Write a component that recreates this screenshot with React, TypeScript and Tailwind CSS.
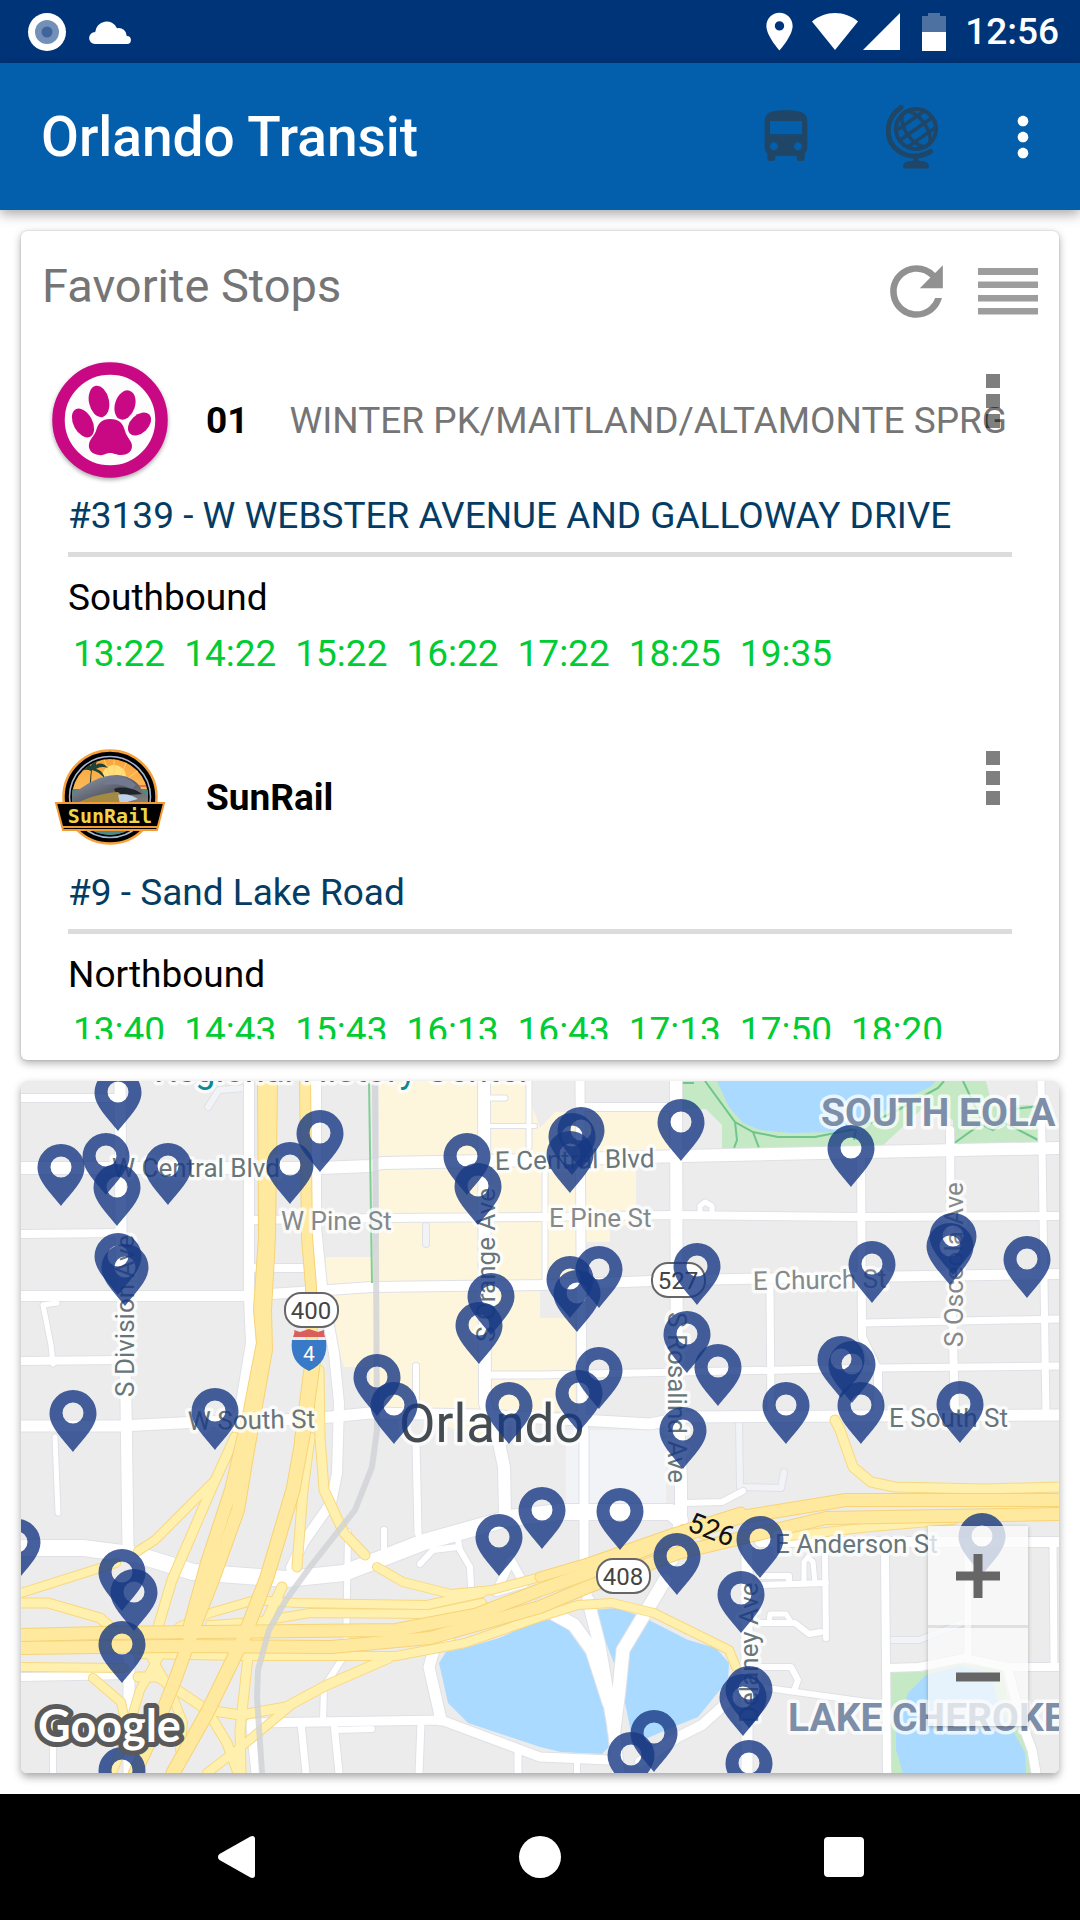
import { MdDirectionsBus, MdLocationOn, MdMoreVert, MdRefresh } from 'react-icons/md';

type Point = [number, number];

type Road = {
  width: number;
  points: string;
};

type MapLabel = {
  text: string;
  x: number;
  y: number;
  rotate?: number;
  minor?: boolean;
};

const favorites = [
  {
    id: 'lynx-01',
    logo: 'lynx',
    route: '01',
    headsign: 'WINTER PK/MAITLAND/ALTAMONTE SPRG',
    stop: '#3139 - W WEBSTER AVENUE AND GALLOWAY DRIVE',
    direction: 'Southbound',
    times: ['13:22', '14:22', '15:22', '16:22', '17:22', '18:25', '19:35'],
  },
  {
    id: 'sunrail',
    logo: 'sunrail',
    route: 'SunRail',
    headsign: '',
    stop: '#9 - Sand Lake Road',
    direction: 'Northbound',
    times: ['13:40', '14:43', '15:43', '16:13', '16:43', '17:13', '17:50', '18:20'],
  },
];

// tip of every stop marker, in map units
const stops: Point[] = [
  [118, 1131], [106, 1195], [61, 1206], [117, 1226], [168, 1205], [320, 1172], [290, 1204],
  [467, 1195], [478, 1225], [118, 1295], [125, 1306], [491, 1335], [479, 1364], [73, 1452],
  [215, 1450], [377, 1416], [394, 1444], [509, 1444], [581, 1169], [572, 1175], [570, 1193],
  [681, 1161], [851, 1187], [599, 1308], [570, 1318], [577, 1332], [697, 1305], [872, 1303],
  [953, 1275], [950, 1285], [1027, 1298], [687, 1373], [718, 1406], [599, 1409], [579, 1432],
  [841, 1398], [852, 1403], [786, 1444], [861, 1444], [960, 1443], [683, 1469], [17, 1581],
  [122, 1611], [134, 1631], [122, 1683], [122, 1809], [499, 1576], [542, 1549], [620, 1550],
  [677, 1595], [760, 1578], [982, 1575], [741, 1633], [749, 1728], [743, 1736], [654, 1772],
  [631, 1794], [749, 1802],
];

const streets: Road[] = [
  // service roads and cul-de-sacs
  { width: 5, points: '55,1437 58,1513' },
  { width: 5, points: '53,1364 51,1345 43,1305 57,1303' },
  { width: 5, points: '529,1081 529,1147' },
  { width: 5, points: '490,1098 505,1098' },
  { width: 4, points: '489,1126 535,1126' },
  { width: 5, points: '545,1173 545,1283' },
  { width: 5, points: '700,1215 700,1206 705,1202 712,1206 712,1215' },
  { width: 6, points: '416,1366 416,1415' },
  { width: 6, points: '384,1530 384,1552' },
  { width: 6, points: '458,1540 460,1550 470,1567 472,1607' },
  { width: 6, points: '420,1564 433,1550 458,1547' },
  { width: 6, points: '334,1730 372,1729' },
  { width: 6, points: '53,1720 53,1773' },
  { width: 6, points: '760,1585 826,1583' },
  { width: 6, points: '760,1576 789,1576 789,1584' },
  { width: 5, points: '804,1583 804,1562 808,1557 813,1562 815,1583' },
  { width: 6, points: '825,1553 826,1638' },
  { width: 6, points: '760,1623 795,1623 809,1634 821,1632' },
  { width: 5, points: '769,1622 770,1614 786,1614 791,1622' },
  { width: 6, points: '760,1667 791,1667 798,1680 794,1691' },
  { width: 6, points: '760,1687 860,1701 885,1704' },
  { width: 6, points: '685,1503 722,1502 743,1491' },
  { width: 6, points: '577,1773 577,1760' },
  // east to west
  { width: 8, points: '21,1098 122,1098' },
  { width: 8, points: '580,1107 676,1107' },
  { width: 8, points: '21,1234 120,1233' },
  { width: 8, points: '255,1220 379,1218 540,1217 671,1215 860,1217 1059,1216' },
  { width: 8, points: '256,1268 305,1268' },
  { width: 8, points: '21,1361 120,1360' },
  { width: 7, points: '492,1375 540,1375 877,1368 1059,1366' },
  { width: 7, points: '864,1323 1059,1319' },
  { width: 10, points: '21,1296 241,1296 300,1292 372,1287 540,1285 680,1280 860,1277 1059,1274' },
  { width: 12, points: '21,1168 320,1168 370,1166 382,1163 540,1160 682,1156 1059,1148' },
  { width: 11, points: '21,1426 120,1426 200,1422 310,1419 370,1413 480,1415 581,1420 650,1424 685,1417 1059,1415' },
  { width: 8, points: '21,1677 131,1675' },
  { width: 10, points: '760,1542 1059,1542' },
  { width: 8, points: '888,1668 919,1667 964,1658 1008,1667 1059,1667' },
  { width: 9, points: '251,1723 441,1720 540,1757 609,1760' },
  { width: 16, points: '21,1548 83,1548 138,1555 193,1572 286,1579 344,1573 424,1542 510,1518 560,1512 671,1512 680,1520' },
  // north to south
  { width: 11, points: '120,1081 121,1236 126,1403 128,1547' },
  { width: 11, points: '129,1643 129,1773' },
  { width: 10, points: '249,1081 249,1297 251,1343 241,1403 237,1440' },
  { width: 10, points: '316,1081 316,1227 322,1287 334,1353 339,1403 338,1440 337,1473 331,1503 303,1543 291,1568' },
  { width: 12, points: '484,1081 485,1403 499,1443 504,1467 505,1513' },
  { width: 9, points: '580,1081 582,1423 584,1430 584,1563 588,1603' },
  { width: 12, points: '588,1600 599,1643 614,1730 618,1773' },
  { width: 12, points: '676,1081 677,1403 681,1480 681,1517 672,1560' },
  { width: 13, points: '665,1580 623,1650 619,1690 614,1730' },
  { width: 8, points: '861,1150 862,1337 878,1370 878,1410' },
  { width: 7, points: '770,1287 771,1415' },
  { width: 8, points: '950,1130 951,1270 955,1413' },
  { width: 7, points: '1041,1081 1046,1415' },
  { width: 7, points: '416,1443 418,1533' },
  { width: 6, points: '348,1532 346,1653 324,1687 323,1720' },
  { width: 9, points: '251,1726 256,1773' },
  { width: 7, points: '301,1723 306,1773' },
  { width: 7, points: '334,1723 339,1773' },
  { width: 7, points: '421,1723 419,1773' },
  { width: 7, points: '518,1750 518,1773' },
  { width: 11, points: '441,1720 429,1667 434,1650 455,1630 482,1612' },
  { width: 8, points: '885,1553 887,1773' },
  { width: 9, points: '1008,1670 1022,1723 1032,1750 1036,1773' },
  { width: 7, points: '1053,1543 1054,1663' },
  { width: 7, points: '968,1547 968,1660' },
  { width: 11, points: '747,1543 747,1773' },
  { width: 10, points: '733,1697 702,1725 678,1737 640,1762' },
  { width: 13, points: '540,1606 574,1625 592,1650 609,1703' },
  { width: 8, points: '510,1563 496,1592 524,1584 511,1560' },
];

const backStreets: Road[] = [
  { width: 6, points: '208,1107 219,1090 245,1088' },
  { width: 6, points: '426,1226 426,1244' },
  { width: 6, points: '739,1420 740,1487 781,1488 784,1472' },
  { width: 6, points: '890,1640 919,1640 950,1628 968,1620' },
];

const ramps: Road[] = [
  { width: 9, points: '235,1437 214,1483 172,1580 158,1627' },
  { width: 8, points: '212,1483 155,1540 138,1551' },
  { width: 8, points: '116,1563 21,1593' },
  { width: 9, points: '310,1437 303,1490 297,1567' },
  { width: 9, points: '319,1370 320,1437 324,1490 344,1533 365,1555' },
  { width: 8, points: '377,1567 403,1582 451,1594 492,1590 540,1577' },
  { width: 9, points: '282,1587 268,1617 248,1657 240,1730 241,1773' },
  { width: 8, points: '179,1627 210,1613 255,1600 296,1603 427,1605 482,1593' },
  { width: 8, points: '210,1625 255,1622 310,1613 430,1614 482,1603' },
  { width: 9, points: '21,1603 48,1603 100,1618 116,1632' },
  { width: 8, points: '21,1667 124,1668' },
  { width: 9, points: '138,1677 158,1677 207,1710 241,1715 286,1707 327,1685 389,1658' },
  { width: 8, points: '93,1678 121,1702 127,1730' },
  { width: 8, points: '150,1655 170,1690 183,1723 180,1750' },
  { width: 9, points: '207,1710 227,1743 238,1773' },
  { width: 8, points: '160,1655 140,1690 125,1740 112,1773' },
  { width: 8, points: '207,1773 241,1747 289,1707' },
  { width: 8, points: '138,1654 241,1656 396,1656 465,1643 540,1617 578,1605 612,1603 654,1613 729,1650 736,1667' },
  { width: 9, points: '835,1420 840,1430 853,1467 871,1482 895,1487 984,1489 1059,1487' },
  { width: 8, points: '781,1537 871,1527 953,1520' },
  { width: 6, points: '683,1528 705,1536' },
];

const freeways: Road[] = [
  { width: 12, points: '264,1081 265,1237 260,1310 263,1343 250,1410 231,1490 207,1563 190,1625' },
  { width: 12, points: '271,1081 269,1237 265,1310 266,1350 257,1400 248,1450 238,1510 214,1577 197,1620 175,1680 155,1730 135,1773' },
  { width: 10, points: '305,1081 307,1237 311,1287 312,1350 305,1403 300,1440' },
  { width: 13, points: '315,1350 304,1430 293,1490 267,1577 244,1637 207,1713 173,1773' },
  { width: 12, points: '21,1635 103,1633 396,1630 475,1615 540,1590 588,1573 674,1538 741,1517 846,1500 1059,1500' },
  { width: 12, points: '21,1648 172,1646 331,1647 430,1638 540,1607 585,1588 678,1553 826,1518 1059,1514' },
  { width: 9, points: '540,1577 588,1563 674,1533 741,1512' },
];

const labels: MapLabel[] = [
  { text: 'W Central Blvd', x: 112, y: 1177 },
  { text: 'E Central Blvd', x: 495, y: 1170, rotate: -1 },
  { text: 'W Pine St', x: 281, y: 1230, minor: true },
  { text: 'E Pine St', x: 549, y: 1227, minor: true },
  { text: 'E Church St', x: 753, y: 1290, minor: true, rotate: -1 },
  { text: 'W South St', x: 188, y: 1430, rotate: -1 },
  { text: 'E South St', x: 889, y: 1427 },
  { text: 'E Anderson St', x: 775, y: 1553 },
  { text: 'S Division Ave', x: 134, y: 1397, rotate: -90 },
  { text: 'S Orange Ave', x: 495, y: 1342, rotate: -90 },
  { text: 'S Osceola Ave', x: 963, y: 1347, rotate: -90, minor: true },
  { text: 'S Rosalind Ave', x: 668, y: 1312, rotate: 90 },
  { text: 'Delaney Ave', x: 758, y: 1723, rotate: -90 },
];

const shields = [
  { text: '400', x: 284, y: 1292 },
  { text: '527', x: 651, y: 1262 },
  { text: '408', x: 596, y: 1558 },
];

function StatusBar() {
  return (
    <div className="flex h-[63px] shrink-0 items-center justify-between bg-[#003479] pr-[21px] pl-7 text-white">
      <div className="flex items-center gap-[23px]">
        <svg viewBox="0 0 38 38" className="size-[38px]" aria-hidden="true">
          <circle cx="19" cy="19" r="19" fill="#fff" />
          <circle cx="19" cy="19" r="12" fill="#7290b8" />
          <circle cx="19" cy="19" r="5.5" fill="#40659c" />
        </svg>
        <svg viewBox="0 0 42 24" className="h-6 w-[42px]" fill="currentColor" aria-hidden="true">
          <path d="M6 24a6 6 0 0 1 .2-12A11.4 11.4 0 0 1 28 8.3a8 8 0 0 1 9.800 7.7A4 4 0 0 1 38 24z" />
        </svg>
      </div>
      <div className="flex items-center">
        <MdLocationOn className="size-[45px]" aria-hidden="true" />
        <svg viewBox="0 0 46 37" className="ml-[10px] h-[37px] w-[46px]" fill="currentColor" aria-hidden="true">
          <path d="M23 37 0 8.500C6.500 3 14.500 0 23 0s16.500 3 23 8.500z" />
        </svg>
        <svg viewBox="0 0 37 37" className="ml-[5px] size-[37px]" fill="currentColor" aria-hidden="true">
          <path d="M37 0v37H0z" />
        </svg>
        <svg viewBox="0 0 24 38" className="mr-[19px] ml-[22px] h-[38px] w-6" fill="currentColor" aria-hidden="true">
          <path d="M6 0h12v3h6v16H0V3h6z" opacity="0.3" />
          <path d="M0 19h24v19H0z" />
        </svg>
        <span className="text-[37px] leading-[43px] font-medium">12:56</span>
      </div>
    </div>
  );
}

function GlobeIcon() {
  return (
    <svg viewBox="0 0 52 64" className="h-16 w-[52px]" fill="none" stroke="currentColor" strokeLinecap="round" aria-hidden="true">
      <circle cx="30" cy="24" r="20" strokeWidth="4" />
      <g transform="rotate(-35 30 24)" strokeWidth="3.5">
        <ellipse cx="30" cy="24" rx="10" ry="20" />
        <path d="M10 24h40M13 14h34M13 34h34" />
      </g>
      <path d="M15 2.500C-2 14-1 36 12 45.500c10 7.500 22 7 32.500 1" strokeWidth="5" />
      <path d="M30 51v6" strokeWidth="5" />
      <path d="M19 61.500c0-3 5-4 11-4s11 1 11 4z" fill="currentColor" strokeWidth="4" strokeLinejoin="round" />
    </svg>
  );
}

function AppBar() {
  return (
    <header className="relative z-10 flex h-[147px] shrink-0 items-center justify-between bg-[#035fac] pr-[25px] pl-[41px] shadow-[0_4px_12px_rgba(0,0,0,0.35)]">
      <h1 className="text-[55px] leading-[64px] font-medium text-white">Orlando Transit</h1>
      <div className="flex items-center text-[#1f4666]">
        <button type="button" aria-label="Routes" className="mr-[68px]">
          <MdDirectionsBus className="size-16" />
        </button>
        <button type="button" aria-label="Map" className="mr-[53px]">
          <GlobeIcon />
        </button>
        <button type="button" aria-label="More options" className="text-white">
          <MdMoreVert className="size-16" />
        </button>
      </div>
    </header>
  );
}

function LynxLogo() {
  return (
    <svg viewBox="0 0 116 116" className="size-full overflow-visible drop-shadow-[0_2px_2px_rgba(0,0,0,0.35)]" aria-hidden="true">
      <circle cx="58" cy="58" r="51.500" fill="#fdfdfd" stroke="#c90983" strokeWidth="12.500" />
      <g fill="#c90983">
        <ellipse cx="47" cy="39.500" rx="10" ry="16" transform="rotate(-12 47 39.500)" />
        <ellipse cx="73" cy="43" rx="10" ry="15" transform="rotate(18 73 43)" />
        <ellipse cx="31" cy="61" rx="9.500" ry="15.500" transform="rotate(-28 31 61)" />
        <ellipse cx="87.500" cy="62" rx="9" ry="13.500" transform="rotate(46 87.500 62)" />
        <path d="M58 57c9 0 13 4 15 12 2 7 7 10 7 15 0 6-5 9-11 9-5 0-7-2-11-2s-6 3-11 2c-7-1-11-5-10-11 1-5 5-8 7-13 2-8 6-12 14-12z" />
      </g>
    </svg>
  );
}

function SunRailLogo() {
  return (
    <svg viewBox="0 0 116 116" className="size-full" aria-hidden="true">
      <defs>
        <linearGradient id="sunrail-sky" x1="0" y1="0" x2="0" y2="1">
          <stop offset="0" stopColor="#fba43a" />
          <stop offset="0.6" stopColor="#fdc46b" />
          <stop offset="1" stopColor="#4f8f8a" />
        </linearGradient>
        <linearGradient id="sunrail-train" x1="0" y1="0" x2="1" y2="1">
          <stop offset="0" stopColor="#9aa3b5" />
          <stop offset="0.5" stopColor="#5b5f6b" />
          <stop offset="1" stopColor="#8d8a80" />
        </linearGradient>
        <clipPath id="sunrail-disc">
          <circle cx="58" cy="58" r="38" />
        </clipPath>
      </defs>
      <circle cx="58" cy="58" r="46.500" fill="#000" stroke="#f7a13c" strokeWidth="2.500" />
      <circle cx="58" cy="58" r="40.500" fill="#000" stroke="#a9b7d6" strokeWidth="1.500" />
      <circle cx="58" cy="58" r="38" fill="url(#sunrail-sky)" />
      <g clipPath="url(#sunrail-disc)">
        <circle cx="62" cy="38" r="12" fill="#ffdf7c" />
        <path d="M58 38 50 14M62 36V14M68 38l10-22M72 42l22-16" stroke="#ffd06a" />
        <path d="M18 50h78v50H18z" fill="#4d8a85" />
        <path d="M82 46h14v2H82z" fill="#e8715b" />
        <path d="M37 52c1-8 1-14 2-20-6-3-11 0-15 6 2-7 5-10 10-10-3-3-7-3-11-1 5-5 12-4 16 0 1-5 5-8 10-9-3 2-5 5-5 8 4-3 9-1 12 3-5-2-9-1-12 1 5 1 8 5 9 10-4-5-8-8-13-9-1 7-1 13-1 21z" fill="#1d4338" />
        <path d="M16 60c14-14 34-25 50-24 12 1 22 8 24 16l8 8v10H16z" fill="url(#sunrail-train)" />
        <path d="M54 40c8-4 22-3 30 6l-4 4c-8-4-18-6-28-4z" fill="#70798f" />
        <path d="M62 50c8-3 20-1 28 5-10 1-19 1-26-1z" fill="#1f232b" />
        <path d="M20 66c14-7 30-12 46-13 5 4 7 9 7 14z" fill="#a28a42" />
        <path d="M66 56c6-2 14 0 20 4l-18 5z" fill="#bcd0ea" />
      </g>
      <path d="M4 64h108l-7 27H11z" fill="#000" stroke="#f39a32" strokeWidth="2" />
      <path d="M11 88h94" stroke="#f39a32" strokeWidth="2" />
      <text
        x="58"
        y="84"
        textAnchor="middle"
        fill="#f0d548"
        className="font-['DejaVu_Sans_Mono',monospace] text-[20px] font-bold"
      >
        SunRail
      </text>
    </svg>
  );
}

function FavoriteItem({ item }: { item: (typeof favorites)[number] }) {
  return (
    <li className="relative px-[47px] pt-[21px] pb-[43px] text-[37px] leading-[43px]">
      <div className="-ml-4 flex h-[116px] items-center">
        <div className="size-[116px] shrink-0">
          {item.logo === 'lynx' ? <LynxLogo /> : <SunRailLogo />}
        </div>
        <span className="ml-[38px] font-bold whitespace-nowrap text-black">{item.route}</span>
        {item.headsign && (
          <span className="ml-[41px] whitespace-nowrap text-[#757575]">{item.headsign}</span>
        )}
      </div>
      <button
        type="button"
        aria-label={`Options for ${item.route}`}
        className="absolute top-[33px] right-[59px] flex flex-col gap-1.5"
      >
        <span className="size-3.5 bg-black/50" />
        <span className="size-3.5 bg-black/50" />
        <span className="size-3.5 bg-black/50" />
      </button>
      <p className="mt-4 whitespace-nowrap text-[#053c63]">{item.stop}</p>
      <hr className="mt-[15px] border-t-[5px] border-[#dcdcdc]" />
      <p className="mt-[19px] text-black">{item.direction}</p>
      <ul className="mt-[13px] flex gap-[19px] pl-[5px] text-[#00cc33]">
        {item.times.map((time) => (
          <li key={time}>{time}</li>
        ))}
      </ul>
    </li>
  );
}

function FavoritesCard() {
  return (
    <section className="flex min-h-0 flex-1 flex-col rounded-md bg-white pb-[21px] shadow-[0_3px_8px_rgba(0,0,0,0.32),0_0_2px_rgba(0,0,0,0.2)]">
      <div className="flex shrink-0 items-start justify-between px-[21px] pt-[21px] pb-[10px]">
        <h2 className="text-[47px] leading-[68px] text-[#757575]">Favorite Stops</h2>
        <div className="flex items-center gap-[22px]">
          <button type="button" aria-label="Refresh">
            <MdRefresh className="size-[79px] text-[#919191]" />
          </button>
          <button type="button" aria-label="Reorder">
            <svg viewBox="0 0 60 47" className="h-[47px] w-[60px]" fill="#9d9d9d" aria-hidden="true">
              <path d="M0 0h60v7H0zM0 13.500h60v6.500H0zM0 27h60v6.500H0zM0 40h60v6.500H0z" />
            </svg>
          </button>
        </div>
      </div>
      <ul className="min-h-0 flex-1 overflow-hidden">
        {favorites.map((item) => (
          <FavoriteItem key={item.id} item={item} />
        ))}
      </ul>
    </section>
  );
}

function Roads({ roads, fill, casing }: { roads: Road[]; fill: string; casing: string }) {
  return (
    <g fill="none" strokeLinejoin="round" strokeLinecap="round">
      {roads.map((road) => (
        <polyline key={road.points} points={road.points} stroke={casing} strokeWidth={road.width + 2} />
      ))}
      {roads.map((road) => (
        <polyline key={road.points} points={road.points} stroke={fill} strokeWidth={road.width} />
      ))}
    </g>
  );
}

function CityMap() {
  return (
    <svg viewBox="21 1081 1038 692" className="block h-auto w-full" role="img" aria-label="Map of downtown Orlando">
      <rect x="21" y="1081" width="1038" height="692" fill="#ececec" />

      {/* downtown, parks and lakes */}
      <path
        d="M379 1081H523L540 1128 555 1112H669V1153L636 1163V1225H610V1242H585V1285L557 1287 540 1290V1318H575V1370L576 1410 545 1412 477 1437 400 1410H370V1367H344L326 1305V1257H373L379 1240z"
        fill="#fdf6dd"
      />
      <path d="M566 1430h100v75H566z" fill="#f1f3f6" />
      <path
        d="M682 1081H986L992 1105H1037V1143H953V1120L925 1106 880 1148H722V1125L706 1109H682z"
        fill="#c5e8c5"
      />
      <path
        d="M717 1081H936L930 1087 902 1100 870 1120 833 1132 791 1133 760 1130 743 1123 729 1107z"
        fill="#aadaff"
      />
      <path
        d="M682 1083h12M705 1081l30 41 18 10 25 5h37l45-9 38-18 40-22 6-7M735 1122l2 18-3 8M753 1132l6 16M854 1140l2-10M963 1081l18 38 14 3 10-12 35-4M953 1144l28-20 12 6 12-7 33 17"
        fill="none"
        stroke="#6fc58a"
        strokeWidth="2"
      />
      <path
        d="M439 1663 446 1652 465 1648 499 1638 540 1620 561 1620 592 1663 609 1730V1747L602 1754 561 1752 540 1747 468 1723 448 1703z"
        fill="#aadaff"
      />
      <path
        d="M593 1610 616 1608 643 1617 688 1640 716 1648 729 1663 728 1680 698 1717 678 1725 643 1740 631 1732 623 1693 614 1663z"
        fill="#aadaff"
      />
      <path d="M891 1672H922L953 1663 1001 1668 1008 1697 1029 1750 1031 1773H891z" fill="#c5e8c5" />
      <path
        d="M903 1773 896 1750V1730L908 1693 926 1675 960 1666 991 1673 998 1703 1025 1753 1026 1773z"
        fill="#aadaff"
      />

      <Roads roads={backStreets} fill="#f1f3f6" casing="#dfe1e6" />
      <Roads roads={streets} fill="#ffffff" casing="#dfe1e6" />
      <Roads roads={ramps} fill="#fff0ae" casing="#f8d880" />
      <Roads roads={freeways} fill="#ffe99f" casing="#f7d375" />

      {/* rail line */}
      <path d="M369 1081l3 202" stroke="#82cf95" strokeWidth="2" />
      <path
        d="M375 1081 377 1430 372 1467 355 1510 310 1567 286 1600 269 1630 258 1670 257 1697 262 1773"
        fill="none"
        stroke="#cfd2d6"
        strokeOpacity="0.8"
        strokeWidth="6"
      />

      <g
        stroke="#fff"
        strokeOpacity="0.75"
        strokeWidth="7"
        strokeLinejoin="round"
        className="font-[Roboto,sans-serif] text-[26px] [paint-order:stroke]"
      >
        {labels.map((label) => (
          <text
            key={label.text}
            x={label.x}
            y={label.y}
            fill={label.minor ? '#84898c' : '#68767a'}
            transform={label.rotate ? `rotate(${label.rotate} ${label.x} ${label.y})` : undefined}
          >
            {label.text}
          </text>
        ))}
        <text x="154" y="1082" fill="#0a8a94" className="text-[36px]">
          Regional History Center
        </text>
        <text x="399" y="1442" fill="#444c52" className="text-[53px]">
          Orlando
        </text>
        <text x="821" y="1126" fill="#7d8ea8" className="text-[39px] font-bold">
          SOUTH EOLA
        </text>
        <text x="788" y="1731" fill="#7d8ea8" className="text-[39px] font-bold">
          LAKE CHEROKE
        </text>
      </g>
      <text
        x="686"
        y="1530"
        fill="#111"
        transform="rotate(21 686 1530)"
        className="font-[Roboto,sans-serif] text-[28px]"
      >
        526
      </text>

      {/* highway shields */}
      {shields.map((shield) => (
        <g key={shield.text}>
          <rect x={shield.x + 1} y={shield.y + 1} width="53" height="34" rx="16" fill="#fff" stroke="#666" strokeWidth="2" />
          <text
            x={shield.x + 27}
            y={shield.y + 27}
            textAnchor="middle"
            fill="#444"
            className="font-[Roboto,sans-serif] text-[24px]"
          >
            {shield.text}
          </text>
        </g>
      ))}
      <path d="M293 1337c1-3 2-5 1-7l6 2 9-3 9 3 6-2c0 2 0 4 1 7z" fill="#d95f5c" />
      <path d="M292 1340h34c2 15-4 25-17 31-13-6-19-16-17-31z" fill="#3879c8" />
      <text x="309" y="1361" textAnchor="middle" fill="#fff" className="font-[Roboto,sans-serif] text-[21px]">
        4
      </text>

      {/* stop markers */}
      {stops.map(([x, y]) => (
        <path
          key={`${x}-${y}`}
          transform={`translate(${x} ${y})`}
          d="M0-62a23.500 23.500 0 0 0-23.500 23.500C-23.500-25-10-13 0 0 10-13 23.500-25 23.500-38.500A23.500 23.500 0 0 0 0-62zm0 12.500a10.500 10.500 0 0 1 0 21 10.500 10.500 0 0 1 0-21z"
          fill="#163883"
          fillOpacity="0.8"
        />
      ))}

      <text
        x="38"
        y="1742"
        fill="#fff"
        stroke="#5a5a5a"
        strokeWidth="10"
        strokeLinejoin="round"
        className="font-[Lato,sans-serif] text-[45px] font-bold [paint-order:stroke]"
      >
        Google
      </text>
    </svg>
  );
}

function MapCard() {
  return (
    <section className="relative shrink-0 overflow-hidden rounded-md shadow-[0_4px_8px_rgba(0,0,0,0.35)]">
      <CityMap />
      <div className="absolute right-[31px] bottom-[47px] flex w-[100px] flex-col gap-[3px] bg-black/5 shadow-[0_1px_4px_rgba(0,0,0,0.25)]">
        <button type="button" aria-label="Zoom in" className="flex h-[99px] items-center justify-center bg-white/75">
          <svg viewBox="0 0 44 44" className="size-11" fill="#666" aria-hidden="true">
            <path d="M17.500 0h9v17.500H44v9H26.500V44h-9V26.500H0v-9h17.500z" />
          </svg>
        </button>
        <button type="button" aria-label="Zoom out" className="flex h-[98px] items-center justify-center bg-white/75">
          <svg viewBox="0 0 44 44" className="size-11" fill="#666" aria-hidden="true">
            <path d="M0 17.500h44v9H0z" />
          </svg>
        </button>
      </div>
    </section>
  );
}

function NavigationBar() {
  return (
    <nav className="flex h-[126px] shrink-0 items-center justify-center gap-60 bg-black text-white">
      <button type="button" aria-label="Back" className="flex w-16 justify-center">
        <svg viewBox="0 0 37 42" className="h-[42px] w-[37px]" fill="currentColor" aria-hidden="true">
          <path d="M1.500 18 32 .7c3-1.500 5-.2 5 2.300v36c0 2.500-2 3.800-5 2.300L1.500 24c-2-1.500-2-4.500 0-6z" />
        </svg>
      </button>
      <button type="button" aria-label="Home" className="flex w-16 justify-center">
        <span className="size-[42px] rounded-full bg-white" />
      </button>
      <button type="button" aria-label="Recent apps" className="flex w-16 justify-center">
        <span className="size-10 rounded bg-white" />
      </button>
    </nav>
  );
}

export default function App() {
  return (
    <div className="flex h-screen flex-col bg-white font-[Roboto,sans-serif]">
      <StatusBar />
      <AppBar />
      <main className="flex min-h-0 flex-1 flex-col gap-[21px] p-[21px]">
        <FavoritesCard />
        <MapCard />
      </main>
      <NavigationBar />
    </div>
  );
}
